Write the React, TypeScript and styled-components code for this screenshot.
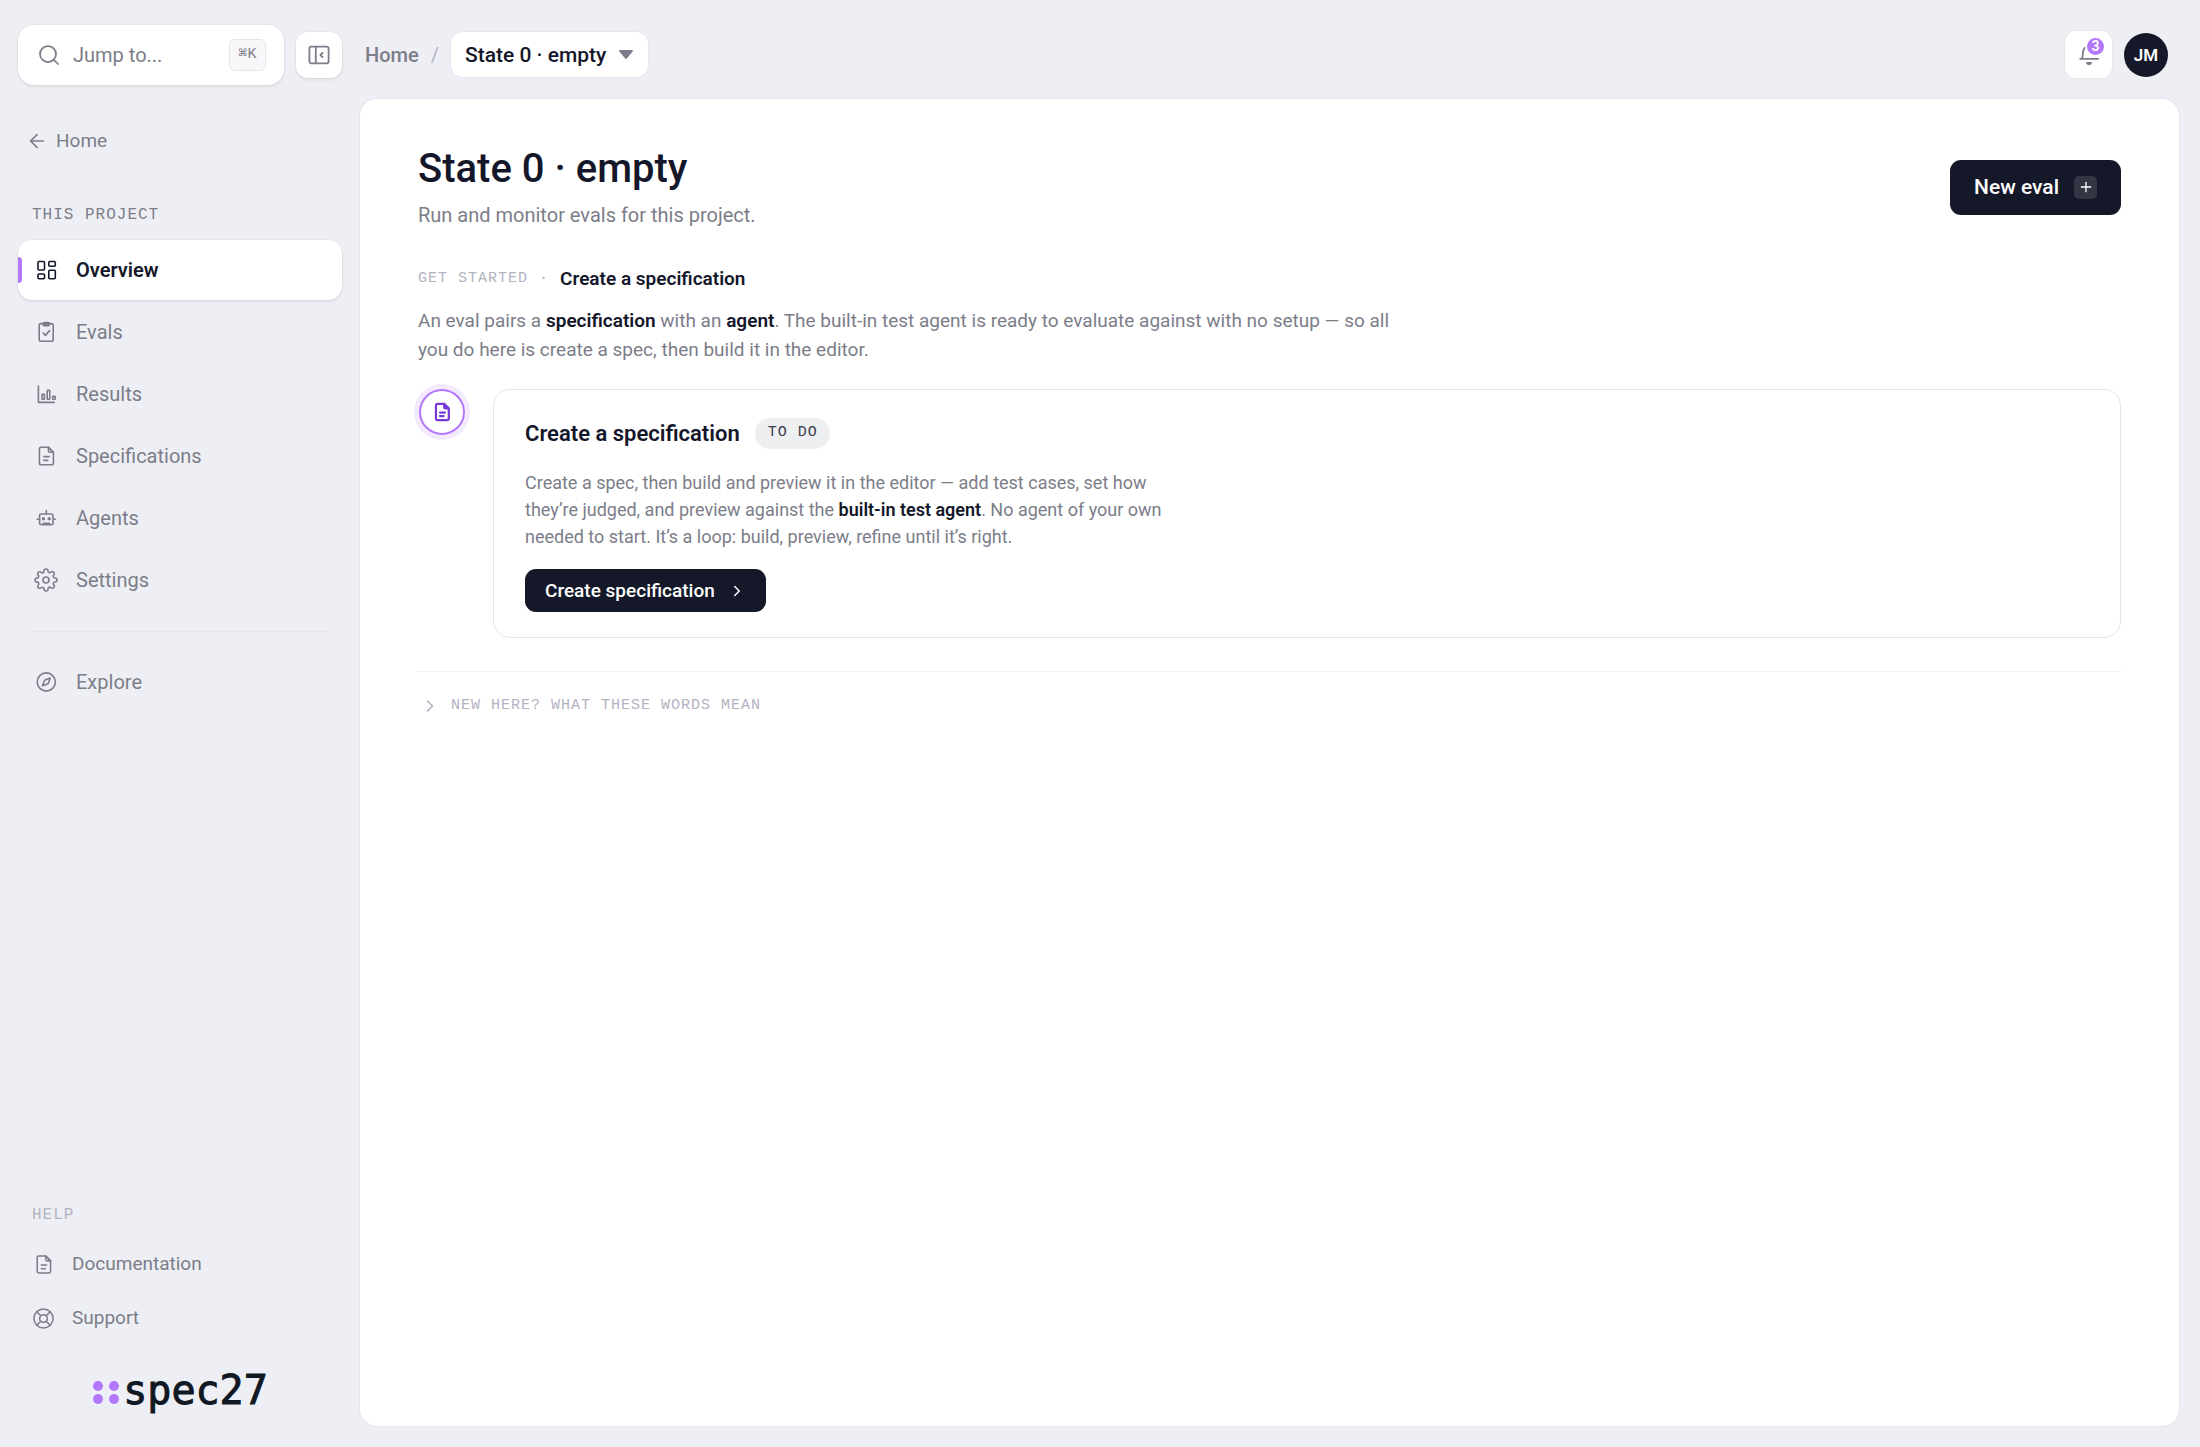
import React from 'react';
import styled, { createGlobalStyle, css } from 'styled-components';
import { ArrowLeft, ChevronRight, LifeBuoy, Plus, Search } from 'lucide-react';
import { FiSettings } from 'react-icons/fi';

const color = {
  page: '#eeeff4',
  surface: '#ffffff',
  ink: '#14172a',
  button: '#151829',
  muted: '#7c7d89',
  faint: '#b2b3c1',
  line: '#e5e6ea',
  softLine: '#f1f1f4',
  accent: '#b377fb',
  accentDeep: '#7638d9',
};

const sans = 'Roboto, "Noto Sans", sans-serif';
const mono = '"Liberation Mono", "DejaVu Sans Mono", monospace';
const brandMono = '"DejaVu Sans Mono", "Liberation Mono", monospace';

const GlobalStyle = createGlobalStyle`
  *, *::before, *::after { box-sizing: border-box; }
  body {
    margin: 0;
    background: ${color.page};
    color: ${color.ink};
    font-family: ${sans};
    font-size: 20px;
    line-height: 28px;
    -webkit-font-smoothing: antialiased;
  }
  h1, h2, h3, p, ul { margin: 0; padding: 0; }
  ul { list-style: none; }
  a { color: inherit; text-decoration: none; }
  button, input, select { font: inherit; color: inherit; border: 0; margin: 0; }
  button, select { cursor: pointer; }
  svg { display: block; flex: none; }
`;

const Shell = styled.div`
  display: grid;
  grid-template-columns: 360px minmax(0, 1fr);
  min-height: 100vh;
`;

/* ---------- Sidebar ---------- */

const Sidebar = styled.aside`
  display: flex;
  flex-direction: column;
  padding: 25px 18px 33px;
`;

const SearchRow = styled.div`
  display: flex;
  align-items: center;
  gap: 12px;
`;

const raised = css`
  background: ${color.surface};
  box-shadow: 0 0 0 1px rgba(20, 23, 42, 0.03), 0 2px 3px rgba(20, 23, 42, 0.08);
`;

const SearchBox = styled.label`
  ${raised}
  display: flex;
  flex: 1;
  align-items: center;
  gap: 12px;
  min-width: 0;
  height: 60px;
  padding: 0 18px 0 19px;
  border-radius: 16px;
  color: ${color.muted};
`;

const SearchInput = styled.input`
  flex: 1;
  min-width: 0;
  padding: 0;
  background: none;
  outline: none;
  &::placeholder { color: ${color.muted}; opacity: 1; }
`;

const Shortcut = styled.kbd`
  display: grid;
  place-items: center;
  width: 37px;
  height: 32px;
  border: 1px solid ${color.line};
  border-radius: 6px;
  background: #f7f7f9;
  font-family: ${mono};
  font-size: 15px;
  line-height: 20px;
`;

const CollapseButton = styled.button`
  ${raised}
  display: grid;
  place-items: center;
  width: 46px;
  height: 46px;
  padding: 0;
  border-radius: 12px;
  color: ${color.muted};
`;

const BackLink = styled.a`
  display: flex;
  align-items: center;
  align-self: flex-start;
  gap: 8px;
  margin-top: 42px;
  padding-left: 8px;
  color: ${color.muted};
  font-size: 19px;
`;

const NavLabel = styled.h2<{ $faint?: boolean }>`
  padding-left: 14px;
  font-family: ${mono};
  font-size: 16px;
  font-weight: 400;
  line-height: 20px;
  letter-spacing: 1px;
  color: ${(p) => (p.$faint ? color.faint : color.muted)};
`;

const ProjectNav = styled.nav`
  margin-top: 50px;
`;

const NavList = styled.ul<{ $top: number }>`
  display: flex;
  flex-direction: column;
  gap: 2px;
  margin-top: ${(p) => p.$top}px;
`;

const NavLink = styled.a<{ $active?: boolean }>`
  position: relative;
  display: flex;
  align-items: center;
  gap: 18px;
  height: 60px;
  padding-left: 16px;
  border-radius: 14px;
  color: ${color.muted};
  overflow: hidden;
  ${(p) => p.$active && css`
    ${raised}
    color: ${color.ink};
    font-weight: 600;
    &::before {
      content: '';
      position: absolute;
      left: 0;
      top: 17px;
      bottom: 17px;
      width: 4px;
      border-radius: 0 4px 4px 0;
      background: ${color.accent};
    }
  `}
`;

const NavRule = styled.hr`
  height: 1px;
  margin: 21px 14px 0;
  border: 0;
  background: #e7e8ed;
`;

const HelpNav = styled.nav`
  margin-top: auto;
`;

const HelpLink = styled(NavLink)`
  gap: 17px;
  height: 52px;
  padding-left: 14px;
  font-size: 19px;
`;

const Brand = styled.div`
  display: flex;
  align-items: center;
  justify-content: center;
  gap: 4px;
  margin-top: 22px;
  font-family: ${brandMono};
  font-size: 40px;
  line-height: 48px;
  color: #101824;
  -webkit-text-stroke: 1px #101824;
`;

/* ---------- Top bar ---------- */

const Column = styled.div`
  display: flex;
  flex-direction: column;
  min-width: 0;
  padding: 0 21px 21px 0;
`;

const TopBar = styled.header`
  display: flex;
  align-items: center;
  justify-content: space-between;
  padding: 31px 11px 21px 5px;
`;

const Crumbs = styled.nav`
  display: flex;
  align-items: center;
  gap: 12px;
  font-weight: 500;
  font-size: 20px;
  color: ${color.muted};
`;

const Slash = styled.span`
  color: ${color.faint};
  font-weight: 400;
`;

const Picker = styled.div`
  display: grid;
  align-items: center;
  justify-items: end;
  > * { grid-area: 1 / 1; }
  > svg { margin-right: 15px; pointer-events: none; }
`;

const PickerSelect = styled.select`
  appearance: none;
  height: 45px;
  padding: 0 41px 0 14px;
  border-radius: 12px;
  background: ${color.surface};
  box-shadow: 0 0 0 1px rgba(20, 23, 42, 0.03);
  color: ${color.ink};
  font-size: 21px;
  font-weight: 500;
`;

const Account = styled.div`
  display: flex;
  align-items: center;
  gap: 12px;
`;

const BellButton = styled.button`
  position: relative;
  display: grid;
  place-items: center;
  width: 47px;
  height: 47px;
  padding: 0;
  border-radius: 11px;
  background: ${color.surface};
  box-shadow: 0 0 0 1px rgba(20, 23, 42, 0.03);
  color: ${color.muted};
`;

const BellCount = styled.span`
  position: absolute;
  top: 5px;
  right: 6px;
  display: grid;
  place-items: center;
  width: 21px;
  height: 21px;
  border: 2px solid ${color.surface};
  border-radius: 50%;
  background: ${color.accent};
  color: #fff;
  font-size: 14px;
  font-weight: 600;
  line-height: 17px;
`;

const Avatar = styled.button`
  display: grid;
  place-items: center;
  width: 44px;
  height: 44px;
  padding: 0;
  border-radius: 50%;
  background: ${color.button};
  color: #fff;
  font-size: 17px;
  font-weight: 600;
`;

/* ---------- Content ---------- */

const Panel = styled.main`
  flex: 1;
  padding: 46px 58px;
  border-radius: 17px;
  background: ${color.surface};
  box-shadow: 0 0 0 1px rgba(20, 23, 42, 0.04);
`;

const PageHead = styled.div`
  display: flex;
  align-items: center;
  justify-content: space-between;
`;

const PageTitle = styled.h1`
  font-size: 40px;
  font-weight: 500;
  line-height: 48px;
`;

const PageLead = styled.p`
  margin-top: 8px;
  color: ${color.muted};
`;

const PrimaryButton = styled.button<{ $compact?: boolean }>`
  display: inline-flex;
  align-items: center;
  gap: ${(p) => (p.$compact ? 13 : 15)}px;
  height: ${(p) => (p.$compact ? 43 : 55)}px;
  padding: 0 ${(p) => (p.$compact ? 20 : 24)}px;
  border-radius: 11px;
  background: ${color.button};
  color: #fff;
  font-size: ${(p) => (p.$compact ? 19 : 21)}px;
  font-weight: 500;
`;

const PlusTile = styled.span`
  display: grid;
  place-items: center;
  width: 23px;
  height: 23px;
  border-radius: 5px;
  background: #323544;
`;

const StepLine = styled.div`
  display: flex;
  align-items: center;
  gap: 11px;
  margin-top: 36px;
`;

const Eyebrow = styled.span`
  font-family: ${mono};
  font-size: 15px;
  line-height: 24px;
  letter-spacing: 1px;
  color: ${color.faint};
`;

const StepName = styled.h2`
  font-size: 19px;
  font-weight: 600;
  line-height: 28px;
`;

const Intro = styled.p`
  max-width: 990px;
  margin-top: 13px;
  color: ${color.muted};
  font-size: 19px;
  line-height: 29px;
`;

const Strong = styled.strong`
  color: ${color.ink};
  font-weight: 600;
`;

const Step = styled.section`
  display: flex;
  align-items: flex-start;
  gap: 28px;
  margin-top: 25px;
`;

const Marker = styled.span`
  display: grid;
  place-items: center;
  flex: none;
  width: 46px;
  height: 46px;
  margin-left: 1px;
  border: 2px solid ${color.accent};
  border-radius: 50%;
  box-shadow: 0 0 0 5px #f3eafe;
  color: ${color.accentDeep};
`;

const Card = styled.div`
  flex: 1;
  padding: 28px 31px 25px;
  border: 1px solid ${color.line};
  border-radius: 17px;
`;

const CardHead = styled.div`
  display: flex;
  align-items: center;
  gap: 15px;
`;

const CardTitle = styled.h3`
  font-size: 22px;
  font-weight: 600;
  line-height: 30px;
`;

const StatusPill = styled.span`
  padding: 3px 12px 4px 13px;
  border-radius: 15px;
  background: #eeeff1;
  color: #3b3d4c;
  font-family: ${mono};
  font-size: 15px;
  line-height: 24px;
  letter-spacing: 1px;
`;

const CardText = styled.p`
  max-width: 655px;
  margin: 20px 0 19px;
  color: ${color.muted};
  font-size: 18px;
  line-height: 27px;
`;

const Glossary = styled.details`
  margin-top: 33px;
  padding-top: 22px;
  border-top: 1px solid ${color.softLine};
`;

const GlossarySummary = styled.summary`
  display: flex;
  align-items: center;
  gap: 11px;
  padding-left: 2px;
  list-style: none;
  cursor: pointer;
  color: ${color.faint};
  details[open] & > svg { transform: rotate(90deg); }
`;

/* ---------- Icons ---------- */

type IconProps = { size?: number; weight?: number; children?: React.ReactNode };

const Icon = ({ size = 24, weight = 1.6, children }: IconProps) => (
  <svg
    width={size}
    height={size}
    viewBox="0 0 24 24"
    fill="none"
    stroke="currentColor"
    strokeWidth={weight}
    strokeLinecap="round"
    strokeLinejoin="round"
    aria-hidden="true"
  >
    {children}
  </svg>
);

const OverviewIcon = () => (
  <Icon>
    <rect x="4" y="3.5" width="6.5" height="8.5" rx="1" />
    <rect x="4" y="16" width="6.5" height="4.8" rx="1" />
    <rect x="14.8" y="3.5" width="6.5" height="4.8" rx="1" />
    <rect x="14.8" y="12.2" width="6.5" height="8.6" rx="1" />
  </Icon>
);

const EvalsIcon = () => (
  <Icon>
    <rect x="5.2" y="3.6" width="14" height="17.6" rx="1.8" />
    <rect x="9" y="2.6" width="6.4" height="3" rx="1.4" fill="currentColor" />
    <path d="m9.2 13 2.2 2.4 4.2-4.8" />
  </Icon>
);

const ResultsIcon = () => (
  <Icon>
    <path d="M4.4 4v16.4h15.8" />
    <rect x="8" y="12.4" width="2.4" height="4.8" rx=".4" />
    <rect x="13.2" y="8.4" width="2.6" height="8.8" rx=".4" />
    <rect x="18.6" y="14.4" width="2.6" height="2.8" rx=".4" />
  </Icon>
);

const DocumentIcon = ({ size, weight }: IconProps) => (
  <Icon size={size} weight={weight}>
    <path d="M14.4 3.2H7.2c-1 0-1.8.8-1.8 1.8v14c0 1 .8 1.8 1.8 1.8h10.400c1 0 1.800-.8 1.800-1.800V8.200z" />
    <path d="M14.4 3.2v3.6c0 .8.6 1.4 1.4 1.4h3.6z" fill={weight ? 'currentColor' : 'none'} />
    <path d="M9.8 12.6h5.4M9.8 16.4h4" />
  </Icon>
);

const AgentsIcon = () => (
  <Icon>
    <rect x="5.6" y="8" width="13.4" height="10.8" rx="1.6" />
    <path d="M12.3 4.6V8M3.2 13.2h2M19.4 13.2h2M9 17.2h6.6" />
    <circle cx="9.4" cy="12.8" r=".9" fill="currentColor" />
    <circle cx="15.2" cy="12.8" r=".9" fill="currentColor" />
  </Icon>
);

const ExploreIcon = () => (
  <Icon>
    <circle cx="12.3" cy="12" r="9.1" />
    <path d="m16.2 8.1-1.9 5.1c-.1.3-.4.6-.7.7l-5.1 1.9 1.9-5.1c.1-.3.4-.6.7-.7z" />
  </Icon>
);

const CollapseIcon = () => (
  <Icon weight={1.8}>
    <rect x="2.4" y="3.6" width="19.2" height="16.8" rx="1.8" />
    <path d="M8.8 3.8v16.4M15.6 9.8 13.4 12l2.2 2.2" />
  </Icon>
);

const BellIcon = () => (
  <Icon weight={1.8}>
    <path d="M3.2 15.8h18M5 15.8c1.200-3 .4-6.200 1.600-9C7.600 4.600 9.600 3.200 12 3.200" />
    <path d="M10 20c.4.800 1.200 1.200 2 1.200s1.600-.4 2-1.200z" fill="currentColor" />
  </Icon>
);

const CaretIcon = () => (
  <svg width="14" height="9" viewBox="0 0 14 9" fill={color.muted} aria-hidden="true">
    <path d="M1 0h12c.8 0 1.2.8.7 1.4L7.8 8.400c-.4.500-1.200.5-1.600 0L.3 1.400C-.2.800.2 0 1 0z" />
  </svg>
);

const BrandDots = () => (
  <svg width="27" height="28" viewBox="0 0 27 28" fill={color.accent} aria-hidden="true">
    <circle cx="6" cy="10" r="5" />
    <circle cx="22" cy="10" r="5" />
    <circle cx="6" cy="23" r="5" />
    <circle cx="22" cy="23" r="5" />
  </svg>
);

/* ---------- Page ---------- */

const projectLinks = [
  { label: 'Overview', icon: <OverviewIcon />, active: true },
  { label: 'Evals', icon: <EvalsIcon /> },
  { label: 'Results', icon: <ResultsIcon /> },
  { label: 'Specifications', icon: <DocumentIcon /> },
  { label: 'Agents', icon: <AgentsIcon /> },
  { label: 'Settings', icon: <FiSettings size={24} strokeWidth={1.6} /> },
];

const helpLinks = [
  { label: 'Documentation', icon: <DocumentIcon size={23} /> },
  { label: 'Support', icon: <LifeBuoy size={23} strokeWidth={1.6} /> },
];

export default function App() {
  return (
    <>
      <GlobalStyle />
      <Shell>
        <Sidebar>
          <SearchRow>
            <SearchBox>
              <Search size={24} strokeWidth={1.75} />
              <SearchInput type="text" placeholder="Jump to..." aria-label="Jump to" />
              <Shortcut>⌘K</Shortcut>
            </SearchBox>
            <CollapseButton type="button" aria-label="Collapse sidebar">
              <CollapseIcon />
            </CollapseButton>
          </SearchRow>

          <BackLink href="#home">
            <ArrowLeft size={22} strokeWidth={1.75} />
            Home
          </BackLink>

          <ProjectNav aria-label="Project">
            <NavLabel>THIS PROJECT</NavLabel>
            <NavList $top={15}>
              {projectLinks.map(({ label, icon, active }) => (
                <li key={label}>
                  <NavLink href={`#${label.toLowerCase()}`} $active={active} aria-current={active ? 'page' : undefined}>
                    {icon}
                    {label}
                  </NavLink>
                </li>
              ))}
            </NavList>
            <NavRule />
            <NavList $top={20}>
              <li>
                <NavLink href="#explore">
                  <ExploreIcon />
                  Explore
                </NavLink>
              </li>
            </NavList>
          </ProjectNav>

          <HelpNav aria-label="Help">
            <NavLabel $faint>HELP</NavLabel>
            <NavList $top={13}>
              {helpLinks.map(({ label, icon }) => (
                <li key={label}>
                  <HelpLink href={`#${label.toLowerCase()}`}>
                    {icon}
                    {label}
                  </HelpLink>
                </li>
              ))}
            </NavList>
          </HelpNav>

          <Brand>
            <BrandDots />
            spec27
          </Brand>
        </Sidebar>

        <Column>
          <TopBar>
            <Crumbs aria-label="Breadcrumb">
              <a href="#home">Home</a>
              <Slash>/</Slash>
              <Picker>
                <PickerSelect aria-label="Project">
                  <option>State 0 · empty</option>
                </PickerSelect>
                <CaretIcon />
              </Picker>
            </Crumbs>
            <Account>
              <BellButton type="button" aria-label="Notifications">
                <BellIcon />
                <BellCount>3</BellCount>
              </BellButton>
              <Avatar type="button">JM</Avatar>
            </Account>
          </TopBar>

          <Panel>
            <PageHead>
              <div>
                <PageTitle>State 0 · empty</PageTitle>
                <PageLead>Run and monitor evals for this project.</PageLead>
              </div>
              <PrimaryButton type="button">
                New eval
                <PlusTile>
                  <Plus size={16} strokeWidth={2} />
                </PlusTile>
              </PrimaryButton>
            </PageHead>

            <StepLine>
              <Eyebrow>GET STARTED</Eyebrow>
              <Eyebrow>·</Eyebrow>
              <StepName>Create a specification</StepName>
            </StepLine>
            <Intro>
              An eval pairs a <Strong>specification</Strong> with an <Strong>agent</Strong>. The built-in test
              agent is ready to evaluate against with no setup — so all you do here is create a spec, then build
              it in the editor.
            </Intro>

            <Step>
              <Marker>
                <DocumentIcon size={22} weight={2.4} />
              </Marker>
              <Card>
                <CardHead>
                  <CardTitle>Create a specification</CardTitle>
                  <StatusPill>TO DO</StatusPill>
                </CardHead>
                <CardText>
                  Create a spec, then build and preview it in the editor — add test cases, set how they’re
                  judged, and preview against the <Strong>built-in test agent</Strong>. No agent of your own
                  needed to start. It’s a loop: build, preview, refine until it’s right.
                </CardText>
                <PrimaryButton type="button" $compact>
                  Create specification
                  <ChevronRight size={18} strokeWidth={2} />
                </PrimaryButton>
              </Card>
            </Step>

            <Glossary>
              <GlossarySummary>
                <ChevronRight size={20} strokeWidth={2} />
                <Eyebrow>NEW HERE? WHAT THESE WORDS MEAN</Eyebrow>
              </GlossarySummary>
            </Glossary>
          </Panel>
        </Column>
      </Shell>
    </>
  );
}
